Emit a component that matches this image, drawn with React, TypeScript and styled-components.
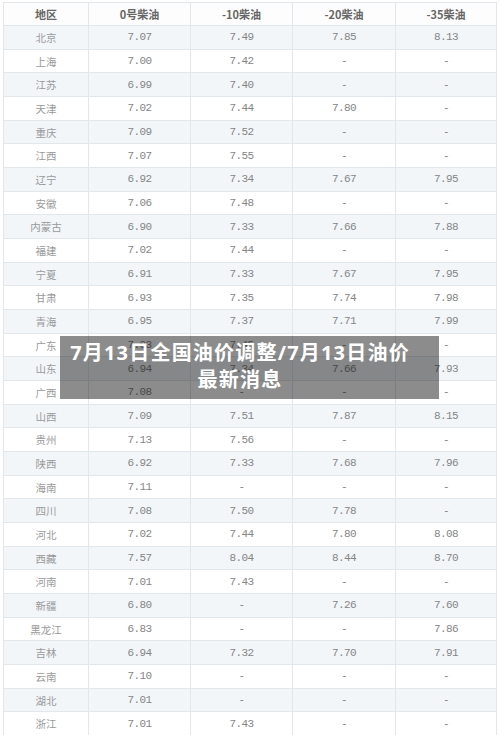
import React from 'react';
import styled, { createGlobalStyle } from 'styled-components';

type Row = [string, string, string, string, string];

const headers = ['地区', '0号柴油', '-10柴油', '-20柴油', '-35柴油'];

const rows: Row[] = [
  ['北京', '7.07', '7.49', '7.85', '8.13'],
  ['上海', '7.00', '7.42', '-', '-'],
  ['江苏', '6.99', '7.40', '-', '-'],
  ['天津', '7.02', '7.44', '7.80', '-'],
  ['重庆', '7.09', '7.52', '-', '-'],
  ['江西', '7.07', '7.55', '-', '-'],
  ['辽宁', '6.92', '7.34', '7.67', '7.95'],
  ['安徽', '7.06', '7.48', '-', '-'],
  ['内蒙古', '6.90', '7.33', '7.66', '7.88'],
  ['福建', '7.02', '7.44', '-', '-'],
  ['宁夏', '6.91', '7.33', '7.67', '7.95'],
  ['甘肃', '6.93', '7.35', '7.74', '7.98'],
  ['青海', '6.95', '7.37', '7.71', '7.99'],
  ['广东', '7.03', '7.45', '-', '-'],
  ['山东', '6.94', '7.34', '7.66', '7.93'],
  ['广西', '7.08', '-', '-', '-'],
  ['山西', '7.09', '7.51', '7.87', '8.15'],
  ['贵州', '7.13', '7.56', '-', '-'],
  ['陕西', '6.92', '7.33', '7.68', '7.96'],
  ['海南', '7.11', '-', '-', '-'],
  ['四川', '7.08', '7.50', '7.78', '-'],
  ['河北', '7.02', '7.44', '7.80', '8.08'],
  ['西藏', '7.57', '8.04', '8.44', '8.70'],
  ['河南', '7.01', '7.43', '-', '-'],
  ['新疆', '6.80', '-', '7.26', '7.60'],
  ['黑龙江', '6.83', '-', '-', '7.86'],
  ['吉林', '6.94', '7.32', '7.70', '7.91'],
  ['云南', '7.10', '-', '-', '-'],
  ['湖北', '7.01', '-', '-', '-'],
  ['浙江', '7.01', '7.43', '-', '-'],
];

const GlobalStyle = createGlobalStyle`
  html, body {
    margin: 0;
    padding: 0;
    background: #ffffff;
    overflow: hidden;
  }
`;

const Page = styled.div`
  position: relative;
  width: 500px;
  height: 735px;
  overflow: hidden;
  padding: 2px 0 0 3px;
  box-sizing: border-box;
`;

const Table = styled.div`
  display: grid;
  grid-template-columns: 84px 101px 101px 102px 100px;
  grid-template-rows: 22px repeat(30, 22.68px);
  gap: 1px;
  padding: 1px;
  width: max-content;
  background: #e2e7eb;
`;

const HeadCell = styled.div`
  display: flex;
  align-items: center;
  justify-content: center;
  background: #fdfdfd;
  color: #666666;
  font-family: 'Noto Sans CJK SC', 'Liberation Serif', serif;
  font-size: 11px;
  font-weight: 700;
`;

const Cell = styled.div<{ $tint: boolean; $num: boolean }>`
  display: flex;
  align-items: center;
  justify-content: center;
  background: ${(p) => (p.$tint ? '#f2f6f9' : '#ffffff')};
  color: ${(p) => (p.$num ? '#858585' : '#9a9a9a')};
  font-family: ${(p) =>
    p.$num
      ? "'Liberation Mono', monospace"
      : "'Noto Sans CJK SC', 'Liberation Serif', serif"};
  font-size: ${(p) => (p.$num ? '11px' : '10.5px')};
  letter-spacing: ${(p) => (p.$num ? '-0.6px' : '0')};
`;

const Overlay = styled.div`
  position: absolute;
  left: 60px;
  top: 336px;
  width: 379px;
  height: 63px;
  box-sizing: border-box;
  padding: 3px 29px 6px 10px;
  background: rgba(0, 0, 0, 0.45);
  color: #ffffff;
  font-family: 'Noto Sans', 'Noto Sans CJK SC', sans-serif;
  font-size: 20px;
  font-weight: 700;
  line-height: 27px;
  letter-spacing: 1.2px;
  text-align: center;
  white-space: nowrap;
`;

export default function App() {
  return (
    <>
      <GlobalStyle />
      <Page>
        <Table>
          {headers.map((h) => (
            <HeadCell key={h}>{h}</HeadCell>
          ))}
          {rows.map((row, i) =>
            row.map((v, j) => (
              <Cell key={`${i}-${j}`} $tint={i % 2 === 0} $num={j > 0}>
                {v}
              </Cell>
            ))
          )}
        </Table>
        <Overlay>
          7月13日全国油价调整/7月13日油价
          <br />
          最新消息
        </Overlay>
      </Page>
    </>
  );
}
